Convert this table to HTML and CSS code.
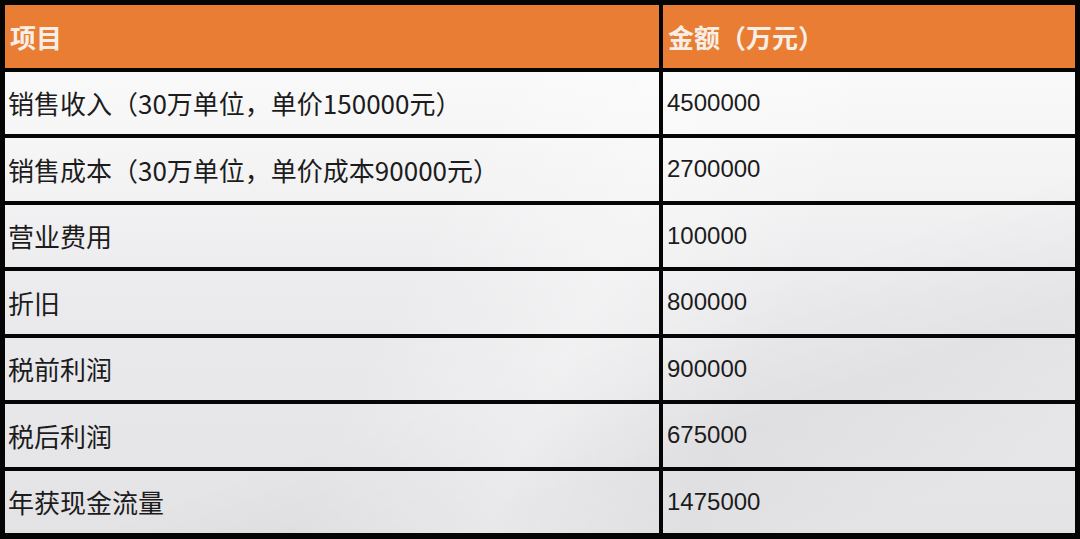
FILE: index.html
```html
<!DOCTYPE html>
<html lang="zh">
<head>
<meta charset="utf-8">
<link rel="stylesheet" href="styles.css">
</head>
<body>
<div class="table">
  <div class="cell head">项目</div>
  <div class="cell head">金额（万元）</div>

  <div class="cell name">销售收入（30万单位，单价150000元）</div>
  <div class="cell num">4500000</div>

  <div class="cell name">销售成本（30万单位，单价成本90000元）</div>
  <div class="cell num">2700000</div>

  <div class="cell name">营业费用</div>
  <div class="cell num">100000</div>

  <div class="cell name">折旧</div>
  <div class="cell num">800000</div>

  <div class="cell name">税前利润</div>
  <div class="cell num">900000</div>

  <div class="cell name">税后利润</div>
  <div class="cell num">675000</div>

  <div class="cell name">年获现金流量</div>
  <div class="cell num">1475000</div>
</div>
</body>
</html>
```

FILE: styles.css
```css
html, body {
  margin: 0;
  padding: 0;
  background: #050505;
  width: 1080px;
  height: 539px;
  overflow: hidden;
}

.table {
  display: grid;
  grid-template-columns: 654px 412px;
  grid-auto-rows: 62.5px;
  column-gap: 4px;
  row-gap: 4px;
  padding: 5px 5px 6px 5px;
}

.cell {
  display: flex;
  align-items: center;
  color: #1c1c1c;
  background-image:
    linear-gradient(115deg, rgba(255,255,255,0) 40%, rgba(255,255,255,0.35) 55%, rgba(255,255,255,0) 70%),
    linear-gradient(160deg, rgba(0,0,0,0) 60%, rgba(0,0,0,0.03) 75%, rgba(0,0,0,0) 90%),
    linear-gradient(180deg, #fdfdfd 0%, #f6f6f7 25%, #ebebed 55%, #e3e3e6 100%);
  background-attachment: fixed;
  background-size: 1080px 539px;
}

.head {
  background: #ea7d34;
  color: #f7efe6;
  font-family: "Noto Sans CJK SC", "Noto Sans", sans-serif;
  font-weight: 700;
  font-size: 26px;
  padding-left: 5px;
}

.name {
  font-family: "Noto Sans CJK SC", "Noto Sans", sans-serif;
  font-size: 26px;
  padding-left: 3px;
}

.num {
  font-family: "Liberation Sans", Arial, sans-serif;
  font-size: 24px;
  padding-left: 4px;
}
```
